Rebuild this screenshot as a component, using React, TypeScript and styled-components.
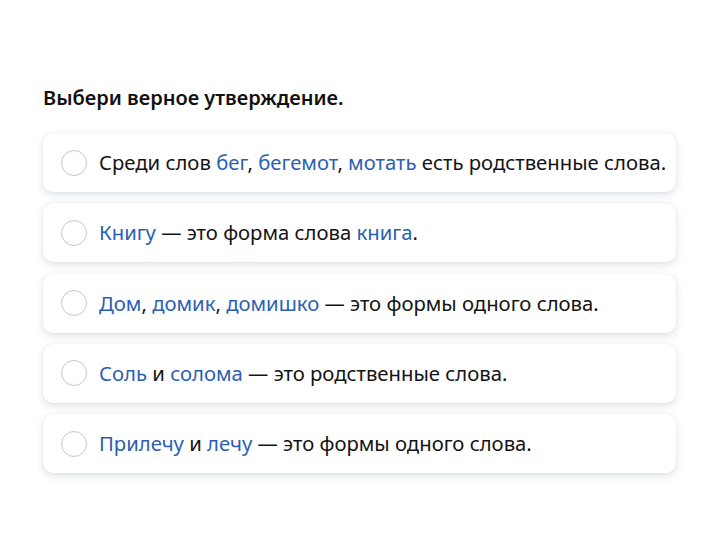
import styled, { createGlobalStyle } from "styled-components";

const GlobalStyle = createGlobalStyle`
  html, body {
    margin: 0;
    padding: 0;
    background: #ffffff;
  }
  body {
    font-family: "Noto Sans", "Open Sans", sans-serif;
    color: #1a1a1a;
  }
`;

type Part = { text: string; link?: boolean };

const OPTIONS: Part[][] = [
  [
    { text: "Среди слов " },
    { text: "бег", link: true },
    { text: ", " },
    { text: "бегемот", link: true },
    { text: ", " },
    { text: "мотать", link: true },
    { text: " есть родственные слова." },
  ],
  [
    { text: "Книгу", link: true },
    { text: " — это форма слова " },
    { text: "книга", link: true },
    { text: "." },
  ],
  [
    { text: "Дом", link: true },
    { text: ", " },
    { text: "домик", link: true },
    { text: ", " },
    { text: "домишко", link: true },
    { text: " — это формы одного слова." },
  ],
  [
    { text: "Соль", link: true },
    { text: " и " },
    { text: "солома", link: true },
    { text: " — это родственные слова." },
  ],
  [
    { text: "Прилечу", link: true },
    { text: " и " },
    { text: "лечу", link: true },
    { text: " — это формы одного слова." },
  ],
];

const Page = styled.div`
  padding: 85px 50px 60px 43px;
`;

const Title = styled.h1`
  margin: 0 0 23px;
  font-size: 20px;
  font-weight: 600;
  line-height: 25px;
  color: #111111;
`;

const List = styled.div`
  display: flex;
  flex-direction: column;
  gap: 11.25px;
`;

const Card = styled.label`
  display: flex;
  align-items: center;
  gap: 12px;
  height: 59px;
  padding: 0 18px;
  box-sizing: border-box;
  background: #ffffff;
  border-radius: 10px;
  box-shadow: 0 3px 8px rgba(20, 30, 60, 0.12), 0 0 2px rgba(20, 30, 60, 0.08);
  cursor: pointer;
`;

const Radio = styled.span`
  flex: none;
  width: 26px;
  height: 26px;
  border-radius: 50%;
  border: 1.5px solid #c4c7cc;
  box-sizing: border-box;
  background: #ffffff;
`;

const Text = styled.span`
  font-size: 20.3px;
  line-height: 25px;
  color: #141414;
  white-space: nowrap;
`;

const Word = styled.span<{ $link?: boolean }>`
  color: ${({ $link }) => ($link ? "#2c5fb3" : "inherit")};
`;

export default function App() {
  return (
    <>
      <GlobalStyle />
      <Page>
        <Title>Выбери верное утверждение.</Title>
        <List>
          {OPTIONS.map((parts, i) => (
            <Card key={i}>
              <Radio />
              <Text>
                {parts.map((p, j) => (
                  <Word key={j} $link={p.link}>
                    {p.text}
                  </Word>
                ))}
              </Text>
            </Card>
          ))}
        </List>
      </Page>
    </>
  );
}
